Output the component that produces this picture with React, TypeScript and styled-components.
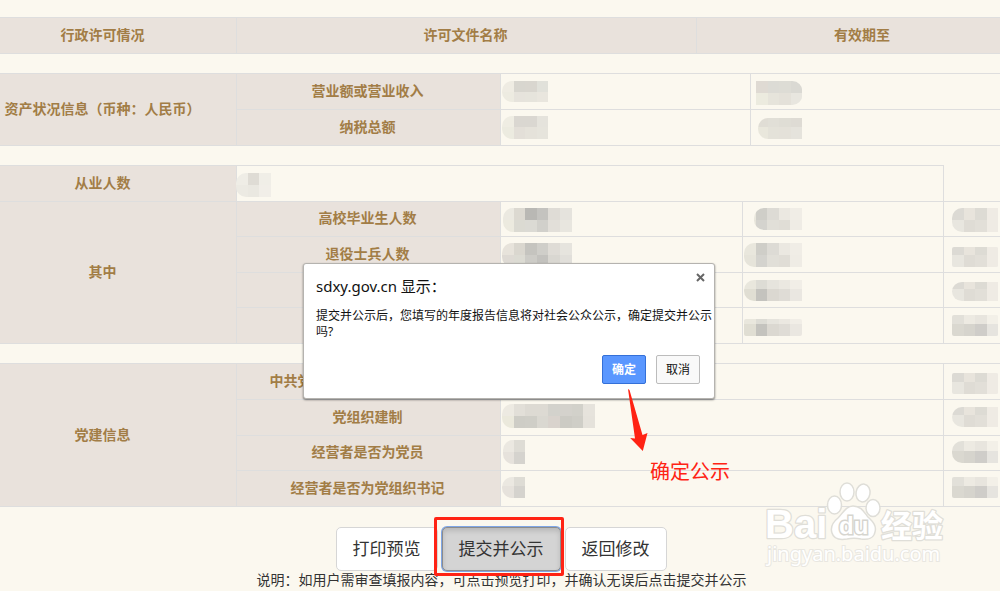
import React, { useId } from 'react';
import styled, { createGlobalStyle } from 'styled-components';

const GlobalStyle = createGlobalStyle`
  * { box-sizing: border-box; }
  body {
    margin: 0;
    background: #fbf8ef;
    color: #333;
    font-family: "Noto Sans", "Noto Sans CJK SC", sans-serif;
    font-size: 14px;
  }
`;

const Page = styled.main`
  position: relative;
  overflow: hidden;
  padding-top: 17px;
`;

const DataTable = styled.table<{ $height: number }>`
  width: calc(100% + 60px);
  height: ${(p) => p.$height}px;
  margin: 0 -30px 19px;
  table-layout: fixed;
  border-collapse: collapse;
`;

const Column = styled.col<{ $width?: number }>`
  width: ${(p) => (p.$width ? `${p.$width}px` : 'auto')};
`;

const Label = styled.th`
  padding: 0 2px 1px 0;
  border: 1px solid #dedede;
  background: #e9e2dc;
  color: #a27d46;
  font-size: 14px;
  line-height: 20px;
  font-weight: 700;
  text-align: center;
  white-space: nowrap;
`;

const Value = styled.td`
  height: 35px;
  padding: 0;
  border: 1px solid #dedede;
  vertical-align: top;
`;

const MosaicSvg = styled.svg`
  display: block;
  width: 100%;
  height: 34px;
  overflow: visible;
`;

type MosaicProps = {
  x: number;
  y: number;
  rows: string[][];
  heights?: [number, number];
  left?: number;
  round?: 'left' | 'right' | 'none';
};

const TILE = 11.6;

/* Pixelated patch hiding a value; x is the tile grid's start inside the cell. */
function Mosaic({ x, y, rows, heights = [12, 12], left = 0, round = 'left' }: MosaicProps) {
  const id = useId();
  const width = rows[0].length * TILE;
  const height = heights[0] + heights[1];
  const clipX = round === 'left' ? x + left : round === 'right' ? x - 20 : x;
  const clipWidth =
    round === 'left' ? width - left + 20 : round === 'right' ? width + 20 : width;
  return (
    <MosaicSvg aria-hidden="true">
      <clipPath id={id}>
        <rect x={clipX} y={y} width={clipWidth} height={height} rx={round === 'none' ? 2 : 10} />
      </clipPath>
      <g clipPath={`url(#${id})`} shapeRendering="crispEdges">
        {rows.map((row, r) =>
          row.map((fill, c) => (
            <rect
              key={`${r}-${c}`}
              x={x + c * TILE}
              y={y + (r ? heights[0] : 0)}
              width={TILE}
              height={heights[r]}
              fill={fill}
            />
          )),
        )}
      </g>
    </MosaicSvg>
  );
}

const Actions = styled.div`
  display: flex;
  justify-content: center;
  gap: 4px;
  padding: 1px 0 0 2px;
`;

const ActionButton = styled.button<{ $active?: boolean }>`
  height: 44px;
  padding: 0 16px;
  border: 1px solid ${(p) => (p.$active ? '#8c8c8c' : '#d6d6d6')};
  border-radius: 5px;
  background: ${(p) => (p.$active ? '#d4d4d4' : '#fff')};
  box-shadow: ${(p) =>
    p.$active ? '0 0 0 1px #7fa6e6, inset 0 3px 5px rgba(0, 0, 0, 0.13)' : 'none'};
  color: #333;
  font: inherit;
  font-size: 17px;
  line-height: 24px;
`;

const Marked = styled.div`
  position: relative;
`;

const RedFrame = styled.span`
  position: absolute;
  inset: -10px -3px -5px -8px;
  border: 3px solid #ff2314;
  border-radius: 2px;
  pointer-events: none;
`;

const Note = styled.p`
  margin: 0;
  padding: 0 0 1px 3px;
  text-align: center;
  font-size: 14px;
  line-height: 18px;
`;

const Dialog = styled.section`
  position: absolute;
  top: 263px;
  left: calc(50% - 197px);
  display: flex;
  flex-direction: column;
  width: 412px;
  height: 136px;
  padding: 11px 0 14px 12px;
  border: 1px solid #b5b3af;
  border-radius: 3px;
  background: #fff;
  box-shadow: 0 1px 2px rgba(0, 0, 0, 0.5);
  color: #111;
`;

const DialogTitle = styled.h2`
  margin: 0;
  font-size: 15px;
  line-height: 22px;
  font-weight: 400;
`;

const DialogText = styled.p`
  margin: 11px 0 0;
  font-size: 12px;
  line-height: 16px;
`;

const DialogClose = styled.button`
  position: absolute;
  top: 7px;
  right: 7px;
  display: flex;
  padding: 2px;
  border: 0;
  background: none;
`;

const DialogButtons = styled.div`
  display: flex;
  justify-content: flex-end;
  gap: 10px;
  margin-top: auto;
  padding-right: 14px;
`;

const DialogButton = styled.button<{ $primary?: boolean }>`
  width: 44px;
  height: 29px;
  padding: 0 0 2px;
  border: 1px solid ${(p) => (p.$primary ? '#3470d8' : '#bcbcbc')};
  border-radius: 2px;
  background: ${(p) => (p.$primary ? '#5a97ff' : '#f9f9f9')};
  color: ${(p) => (p.$primary ? '#fff' : '#111')};
  font: inherit;
  font-size: 12px;
  font-weight: ${(p) => (p.$primary ? 700 : 400)};
`;

const Callout = styled.div`
  position: absolute;
  top: 388px;
  left: calc(50% + 127px);
  display: flex;
  flex-direction: column;
  color: #ff2314;
  font-size: 20px;
  line-height: 26px;
`;

const CalloutText = styled.span`
  margin: 7px 0 0 23px;
`;

const Watermark = styled.svg`
  position: absolute;
  right: 50px;
  bottom: 15px;
  width: 190px;
  height: 96px;
  pointer-events: none;
`;

const sideTiles = [
  ['#dcdad4', '#e8e4dc', '#dddbd4', '#efebe4'],
  ['#e8e6df', '#dfdcd5', '#e2dfd8', '#efebe4'],
];
const sideTilesDark = [
  ['#e2e0d9', '#edeae2', '#e8e5de', '#f3f0e8'],
  ['#dad8d0', '#d6d4cd', '#cfcdc9', '#e6e4df'],
];
const middleTiles = [
  ['#e9e7dd', '#cfcec8', '#dddbd5', '#ebe8e1', '#f0ede6'],
  ['#e6e4da', '#d4d3ce', '#e1dfd8', '#e0ddd6', '#efece5'],
];
const middleTilesDark = [
  ['#e9e7dd', '#dddcd5', '#e6e4dd', '#ebe8e1', '#f1eee7'],
  ['#e0ded3', '#c4c3be', '#dbd8d1', '#dfdcd6', '#eae7e1'],
];
const graduateTiles = [
  ['#ebe9e1', '#dcd9d1', '#b9b8b4', '#c4c3bf', '#dfdcd6', '#e5e3dd'],
  ['#eceadf', '#dbdad2', '#dbdad4', '#d1d0cb', '#e2dfd9', '#e8e6df'],
];
const soldierTiles = [
  ['#e7e3db', '#dad7cf', '#c5c4bf', '#cfcec9', '#dfdcd6', '#e6e4de'],
  ['#dedad4', '#dcdbd3', '#cdccc7', '#c3c2be', '#d9d7d1', '#e1dfda'],
];
const orgTiles = [
  ['#edeae2', '#e2dfd8', '#dddad3', '#dddad3', '#d3d2cc', '#d4d2cc', '#d2d1ca', '#e6e3dc'],
  ['#ebe9dc', '#cecdc6', '#cfcec7', '#dad8d1', '#d9d3cd', '#cccbc4', '#cfcec7', '#e5e2db'],
];
const shortTiles = [
  ['#ebe8e1', '#dedcd5'],
  ['#e6e2dc', '#d5d3ce'],
];

export default function App() {
  return (
    <>
      <GlobalStyle />
      <Page>
        <DataTable $height={37}>
          <colgroup>
            <Column $width={266} />
            <Column $width={460} />
            <Column />
          </colgroup>
          <thead>
            <tr>
              <Label scope="col">行政许可情况</Label>
              <Label scope="col">许可文件名称</Label>
              <Label scope="col">有效期至</Label>
            </tr>
          </thead>
        </DataTable>

        <DataTable $height={73}>
          <colgroup>
            <Column $width={266} />
            <Column $width={264} />
            <Column $width={250} />
            <Column />
          </colgroup>
          <tbody>
            <tr>
              <Label scope="rowgroup" rowSpan={2}>资产状况信息（币种：人民币）</Label>
              <Label scope="row">营业额或营业收入</Label>
              <Value>
                <Mosaic x={1} y={7} heights={[11, 10]} rows={[
                  ['#efece3', '#d8d6cf', '#d9d6cf', '#e1e1da'],
                  ['#edebe1', '#e6e3dc', '#e6e4dc', '#e9e6de'],
                ]} />
              </Value>
              <Value>
                <Mosaic x={5} y={7} round="right" rows={[
                  ['#dfdad3', '#dcdbd5', '#dddcd5', '#dad9d3'],
                  ['#ecebdf', '#e6e4db', '#e4e1d9', '#e8e6df'],
                ]} />
              </Value>
            </tr>
            <tr>
              <Label scope="row">纳税总额</Label>
              <Value>
                <Mosaic x={1} y={6} heights={[11, 12]} rows={[
                  ['#efede3', '#dad7d1', '#dad7d1', '#e5e3dc'],
                  ['#ecebe0', '#e3dfd8', '#e5e2da', '#e6e4dc'],
                ]} />
              </Value>
              <Value>
                <Mosaic x={5} y={8} left={2} heights={[9, 12]} rows={[
                  ['#e0ddd5', '#e1dfd7', '#dfddd5', '#dedbd4'],
                  ['#e9e7dc', '#e4e2d9', '#e4e1d9', '#e5e3dc'],
                ]} />
              </Value>
            </tr>
          </tbody>
        </DataTable>

        <DataTable $height={179}>
          <colgroup>
            <Column $width={266} />
            <Column $width={264} />
            <Column $width={242} />
            <Column $width={201} />
            <Column />
          </colgroup>
          <tbody>
            <tr>
              <Label scope="row">从业人数</Label>
              <Value colSpan={3}>
                <Mosaic x={-1} y={7} rows={[
                  ['#efede6', '#dfdcd5', '#f0eee7'],
                  ['#eceae3', '#eae8e1', '#f1eee8'],
                ]} />
              </Value>
            </tr>
            <tr>
              <Label scope="rowgroup" rowSpan={4}>其中</Label>
              <Label scope="row">高校毕业生人数</Label>
              <Value><Mosaic x={1} y={6} left={1} rows={graduateTiles} /></Value>
              <Value><Mosaic x={1} y={6} left={10} heights={[12, 10]} rows={middleTiles} /></Value>
              <Value><Mosaic x={8} y={6} rows={sideTiles} /></Value>
            </tr>
            <tr>
              <Label scope="row">退役士兵人数</Label>
              <Value><Mosaic x={1} y={6} rows={soldierTiles} /></Value>
              <Value><Mosaic x={1} y={6} rows={middleTiles} /></Value>
              <Value><Mosaic x={8} y={10} heights={[8, 12]} round="none" rows={sideTiles} /></Value>
            </tr>
            <tr>
              <Label scope="row" />
              <Value />
              <Value><Mosaic x={1} y={7} heights={[9, 12]} rows={middleTilesDark} /></Value>
              <Value><Mosaic x={8} y={9} heights={[7, 12]} rows={sideTiles} /></Value>
            </tr>
            <tr>
              <Label scope="row" />
              <Value />
              <Value><Mosaic x={1} y={11} heights={[5, 12]} round="none" rows={middleTilesDark} /></Value>
              <Value><Mosaic x={8} y={7} heights={[9, 12]} round="none" rows={sideTilesDark} /></Value>
            </tr>
          </tbody>
        </DataTable>

        <DataTable $height={144}>
          <colgroup>
            <Column $width={266} />
            <Column $width={264} />
            <Column $width={443} />
            <Column />
          </colgroup>
          <tbody>
            <tr>
              <Label scope="rowgroup" rowSpan={4}>党建信息</Label>
              <Label scope="row">中共党员（包括预备党员）人数</Label>
              <Value />
              <Value><Mosaic x={8} y={9} heights={[9, 12]} round="none" rows={sideTiles} /></Value>
            </tr>
            <tr>
              <Label scope="row">党组织建制</Label>
              <Value><Mosaic x={1} y={4} rows={orgTiles} /></Value>
              <Value><Mosaic x={8} y={7} heights={[8, 12]} rows={sideTiles} /></Value>
            </tr>
            <tr>
              <Label scope="row">经营者是否为党员</Label>
              <Value><Mosaic x={1} y={4} left={1} rows={shortTiles} /></Value>
              <Value><Mosaic x={8} y={5} heights={[10, 12]} rows={sideTilesDark} /></Value>
            </tr>
            <tr>
              <Label scope="row">经营者是否为党组织书记</Label>
              <Value><Mosaic x={1} y={6} heights={[9, 12]} rows={shortTiles} /></Value>
              <Value><Mosaic x={8} y={6} heights={[9, 12]} round="none" rows={sideTilesDark} /></Value>
            </tr>
          </tbody>
        </DataTable>

        <Watermark viewBox="0 0 190 96" role="img" aria-label="Baidu 经验">
          <g fill="#fff" stroke="#dfded8" strokeWidth="1.5">
            <g
              fontFamily="Liberation Sans, sans-serif"
              fontWeight="700"
              paintOrder="stroke"
              strokeWidth="2.5"
              strokeLinejoin="round"
            >
              <text x="5" y="59" fontSize="40">Bai</text>
              <text x="121" y="58" fontSize="31" fontFamily="Noto Sans CJK SC, sans-serif">经验</text>
            </g>
            <ellipse cx="74.500" cy="26" rx="7" ry="9" />
            <ellipse cx="87" cy="13" rx="7" ry="9" />
            <ellipse cx="103" cy="14" rx="7" ry="9" transform="rotate(10 103 14)" />
            <ellipse cx="113" cy="29" rx="7" ry="8.500" />
            <path d="M93 27C86 27 83 34 78 39C73 43 70 48 72 54C74 61 81 61 87 60C92 59 96 59 101 60C108 61 114 59 115 53C117 46 112 42 108 38C104 33 101 27 93 27Z" />
            <text
              x="79"
              y="55"
              fontSize="24"
              fontWeight="700"
              fontFamily="Liberation Sans, sans-serif"
              paintOrder="stroke"
              strokeWidth="3"
              stroke="#d6d5cf"
            >
              du
            </text>
            <text
              x="7"
              y="82"
              fontSize="20"
              fontFamily="Noto Sans, sans-serif"
              paintOrder="stroke"
              strokeWidth="2"
              stroke="#e9e7e1"
            >
              jingyan.baidu.com
            </text>
          </g>
        </Watermark>

        <Actions>
          <ActionButton type="button">打印预览</ActionButton>
          <Marked>
            <ActionButton type="button" $active>提交并公示</ActionButton>
            <RedFrame />
          </Marked>
          <ActionButton type="button">返回修改</ActionButton>
        </Actions>
        <Note>说明：如用户需审查填报内容，可点击预览打印，并确认无误后点击提交并公示</Note>

        <Dialog role="dialog" aria-labelledby="dialog-title">
          <DialogTitle id="dialog-title">sdxy.gov.cn 显示：</DialogTitle>
          <DialogClose type="button" aria-label="关闭">
            <svg width="9" height="9" viewBox="0 0 9 9" stroke="#666" strokeWidth="2">
              <path d="M1 1L8 8M8 1L1 8" />
            </svg>
          </DialogClose>
          <DialogText>提交并公示后，您填写的年度报告信息将对社会公众公示，确定提交并公示吗?</DialogText>
          <DialogButtons>
            <DialogButton type="button" $primary>确定</DialogButton>
            <DialogButton type="button">取消</DialogButton>
          </DialogButtons>
        </Dialog>

        <Callout>
          <svg width="22" height="64" viewBox="0 0 22 64" fill="#ff2314" aria-hidden="true">
            <path d="M1 1L2.500 2L15.500 47L20.500 45L15.800 63L3.200 50L8 50.500Z" />
          </svg>
          <CalloutText>确定公示</CalloutText>
        </Callout>
      </Page>
    </>
  );
}
